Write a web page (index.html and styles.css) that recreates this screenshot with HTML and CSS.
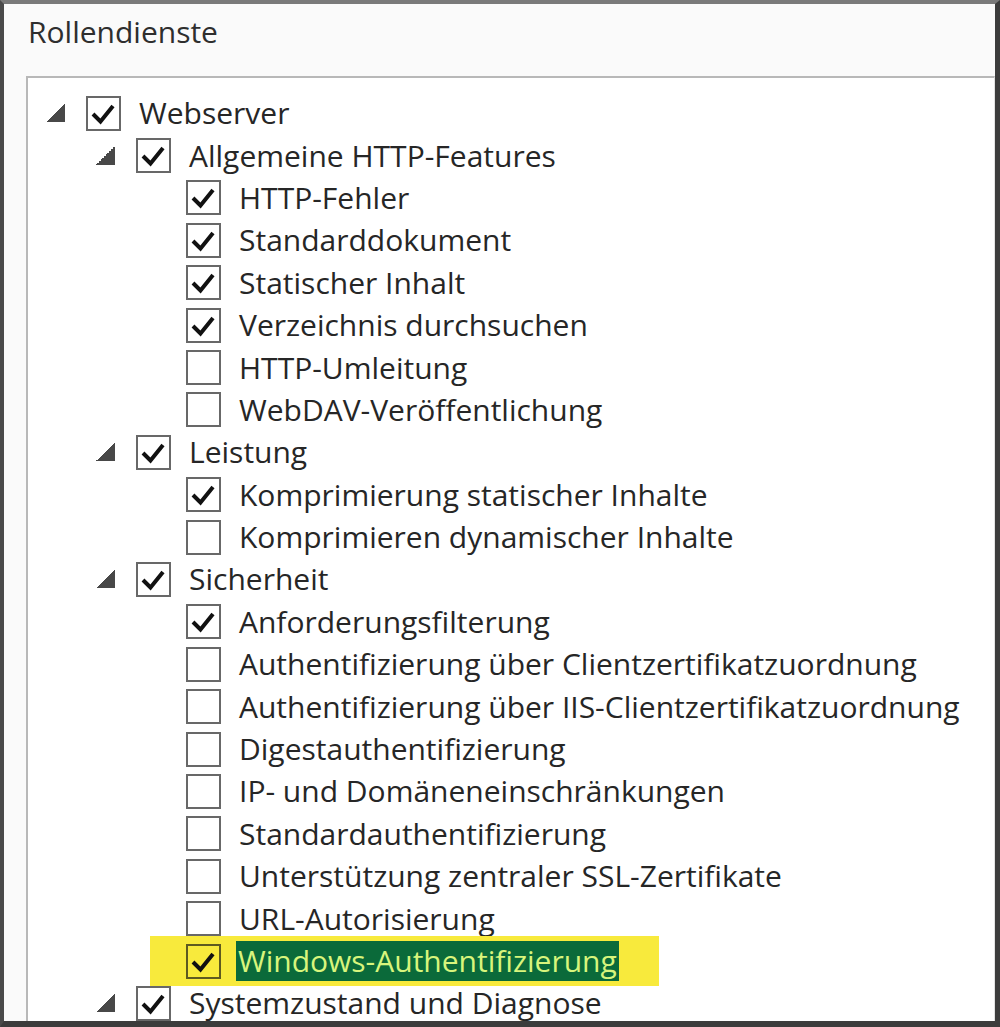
FILE: index.html
```html
<!DOCTYPE html>
<html lang="de">
<head>
  <meta charset="UTF-8" />
  <title>Rollendienste</title>
  <link rel="stylesheet" href="styles.css">
</head>
<body>
  <div class="window">
    <div class="title">Rollendienste</div>

    <div class="tree">
      <div class="row lvl0"><span class="arrow"></span><span class="box on"></span><span class="label">Webserver</span></div>
      <div class="row lvl1"><span class="arrow"></span><span class="box on"></span><span class="label">Allgemeine HTTP-Features</span></div>
      <div class="row lvl2"><span class="noarrow"></span><span class="box on"></span><span class="label">HTTP-Fehler</span></div>
      <div class="row lvl2"><span class="noarrow"></span><span class="box on"></span><span class="label">Standarddokument</span></div>
      <div class="row lvl2"><span class="noarrow"></span><span class="box on"></span><span class="label">Statischer Inhalt</span></div>
      <div class="row lvl2"><span class="noarrow"></span><span class="box on"></span><span class="label">Verzeichnis durchsuchen</span></div>
      <div class="row lvl2"><span class="noarrow"></span><span class="box"></span><span class="label">HTTP-Umleitung</span></div>
      <div class="row lvl2"><span class="noarrow"></span><span class="box"></span><span class="label">WebDAV-Veröffentlichung</span></div>
      <div class="row lvl1"><span class="arrow"></span><span class="box on"></span><span class="label">Leistung</span></div>
      <div class="row lvl2"><span class="noarrow"></span><span class="box on"></span><span class="label">Komprimierung statischer Inhalte</span></div>
      <div class="row lvl2"><span class="noarrow"></span><span class="box"></span><span class="label">Komprimieren dynamischer Inhalte</span></div>
      <div class="row lvl1"><span class="arrow"></span><span class="box on"></span><span class="label">Sicherheit</span></div>
      <div class="row lvl2"><span class="noarrow"></span><span class="box on"></span><span class="label">Anforderungsfilterung</span></div>
      <div class="row lvl2"><span class="noarrow"></span><span class="box"></span><span class="label">Authentifizierung über Clientzertifikatzuordnung</span></div>
      <div class="row lvl2"><span class="noarrow"></span><span class="box"></span><span class="label">Authentifizierung über IIS-Clientzertifikatzuordnung</span></div>
      <div class="row lvl2"><span class="noarrow"></span><span class="box"></span><span class="label">Digestauthentifizierung</span></div>
      <div class="row lvl2"><span class="noarrow"></span><span class="box"></span><span class="label">IP- und Domäneneinschränkungen</span></div>
      <div class="row lvl2"><span class="noarrow"></span><span class="box"></span><span class="label">Standardauthentifizierung</span></div>
      <div class="row lvl2"><span class="noarrow"></span><span class="box"></span><span class="label">Unterstützung zentraler SSL-Zertifikate</span></div>
      <div class="row lvl2"><span class="noarrow"></span><span class="box"></span><span class="label">URL-Autorisierung</span></div>
      <div class="row lvl2">
        <span class="noarrow"></span>
        <span class="mark"><span class="box on"></span><span class="label selected">Windows-Authentifizierung</span></span>
      </div>
      <div class="row lvl1"><span class="arrow"></span><span class="box on"></span><span class="label">Systemzustand und Diagnose</span></div>
    </div>
  </div>
</body>
</html>
```

FILE: styles.css
```css
body {
  margin: 0;
  padding: 0;
  font-family: "Open Sans", "Noto Sans", sans-serif;
  color: #262626;
}

.window {
  box-sizing: border-box;
  height: 1027px;
  display: flex;
  flex-direction: column;
  border-style: solid;
  border-width: 4px 5px 6px 4px;
  border-color: #7a7a7a #3c3c3c #3c3c3c #4a4a4a;
  background-color: #fafafa;
}

.title {
  flex-shrink: 0;
  height: 72px;
  padding-left: 24px;
  font-size: 30px;
  line-height: 56px;
  color: #2e2e2e;
}

.tree {
  flex: 1;
  min-height: 0;
  margin-left: 22px;
  padding-top: 14px;
  background-color: #fff;
  border-top: 2px solid #b8b8b8;
  border-left: 2px solid #b8b8b8;
  border-right: 1px solid #e2e2e2;
}

.row {
  display: flex;
  align-items: center;
  height: 42.4px;
  padding-left: 17px;
  font-size: 30px;
}

.lvl1 { padding-left: 67px; }
.lvl2 { padding-left: 117px; }

.arrow,
.noarrow {
  width: 20px;
  height: 18px;
  margin-right: 21px;
  flex-shrink: 0;
}

.arrow {
  background: linear-gradient(135deg, transparent 50%, #484848 50%);
}

.box {
  box-sizing: border-box;
  width: 35px;
  height: 35px;
  flex-shrink: 0;
  border: 2px solid #686868;
  margin-right: 18px;
}

.box.on {
  background: url("data:image/svg+xml;utf8,<svg xmlns='http://www.w3.org/2000/svg' viewBox='0 0 31 31'><path d='M5 16 L12.5 23.5 L25 8' fill='none' stroke='%23111' stroke-width='4' stroke-linejoin='miter'/></svg>") no-repeat center / 100% 100%;
}

.label {
  white-space: nowrap;
  line-height: 34px;
}

.mark {
  display: flex;
  align-items: center;
  background-color: #f8ea3c;
  margin: -4px -40px -4px -36px;
  padding: 4px 40px 4px 36px;
  height: 50px;
  box-sizing: border-box;
}

.mark .box {
  border-color: #5e5a20;
}

.selected {
  background-color: #0b6a3a;
  color: #d8f57c;
  padding: 0 2px;
  margin-left: -3px;
  line-height: 40px;
}
```
